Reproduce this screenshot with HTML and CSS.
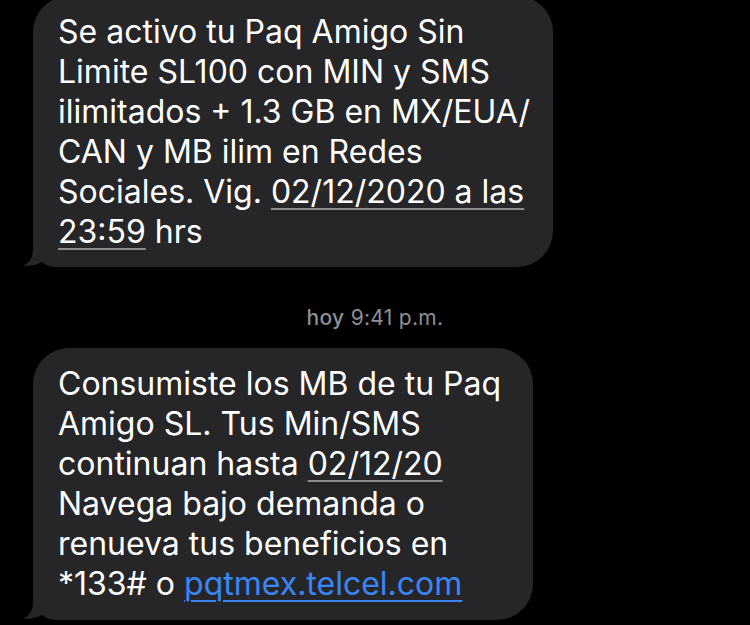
FILE: index.html
```html
<!DOCTYPE html>
<html lang="es">
<head>
<meta charset="utf-8">
<link rel="stylesheet" href="styles.css">
</head>
<body>
<div class="thread">
  <div class="bubble bubble-first">
    <p class="msg">Se activo tu Paq Amigo Sin<br>Limite SL100 con MIN y SMS<br>ilimitados + 1.3 GB en MX/EUA/<br>CAN y MB ilim en Redes<br>Sociales. Vig. <span class="data">02/12/2020 a las</span><br><span class="data">23:59</span> hrs</p>
    <svg class="tail" width="50" height="40" viewBox="0 0 50 40"><path d="M12,0 L12,22 C12,31 8,36 2,38.5 C9,39.5 16,38 21,35 C25,38.5 30,40 36,40 L50,40 L50,0 Z"/></svg>
  </div>
  <div class="stamp"><b>hoy</b> 9:41 p.m.</div>
  <div class="bubble bubble-second">
    <p class="msg">Consumiste los MB de tu Paq<br>Amigo SL. Tus Min/SMS<br>continuan hasta <span class="data">02/12/20</span><br>Navega bajo demanda o<br>renueva tus beneficios en<br>*133# o <span class="link">pqtmex.telcel.com</span></p>
    <svg class="tail" width="50" height="40" viewBox="0 0 50 40"><path d="M12,0 L12,22 C12,31 8,36 2,38.5 C9,39.5 16,38 21,35 C25,38.5 30,40 36,40 L50,40 L50,0 Z"/></svg>
  </div>
</div>
</body>
</html>
```

FILE: styles.css
```css
html, body {
  margin: 0;
  padding: 0;
  background: #000;
}
body {
  width: 750px;
  height: 625px;
  overflow: hidden;
  font-family: Inter, "Noto Sans", "Liberation Sans", sans-serif;
}
.thread {
  display: flex;
  flex-direction: column;
  align-items: flex-start;
  padding-left: 33px;
  margin-top: -4px;
}
.bubble {
  position: relative;
  background: #262629;
  border-radius: 36px;
  padding: 16px 0 15px 25px;
  box-sizing: border-box;
}
.bubble-first {
  width: 520px;
}
.bubble-second {
  width: 500px;
  padding-bottom: 16px;
}
.msg {
  margin: 0;
  color: #fff;
  font-size: 32px;
  line-height: 40px;
  white-space: nowrap;
  position: relative;
  z-index: 1;
}
.data {
  text-decoration: underline;
  text-decoration-color: #8c8c90;
  text-decoration-thickness: 2px;
  text-underline-offset: 5px;
}
.link {
  color: #3a86f4;
  text-decoration: underline;
  text-decoration-thickness: 2px;
  text-underline-offset: 5px;
}
.tail {
  position: absolute;
  left: -12px;
  bottom: 0;
  fill: #262629;
}
.stamp {
  align-self: center;
  margin-left: -33px;
  margin-top: 38px;
  margin-bottom: 17px;
  color: #8e8e93;
  font-size: 21px;
  line-height: 26px;
  letter-spacing: 0.3px;
}
.stamp b {
  font-weight: 500;
}
```
